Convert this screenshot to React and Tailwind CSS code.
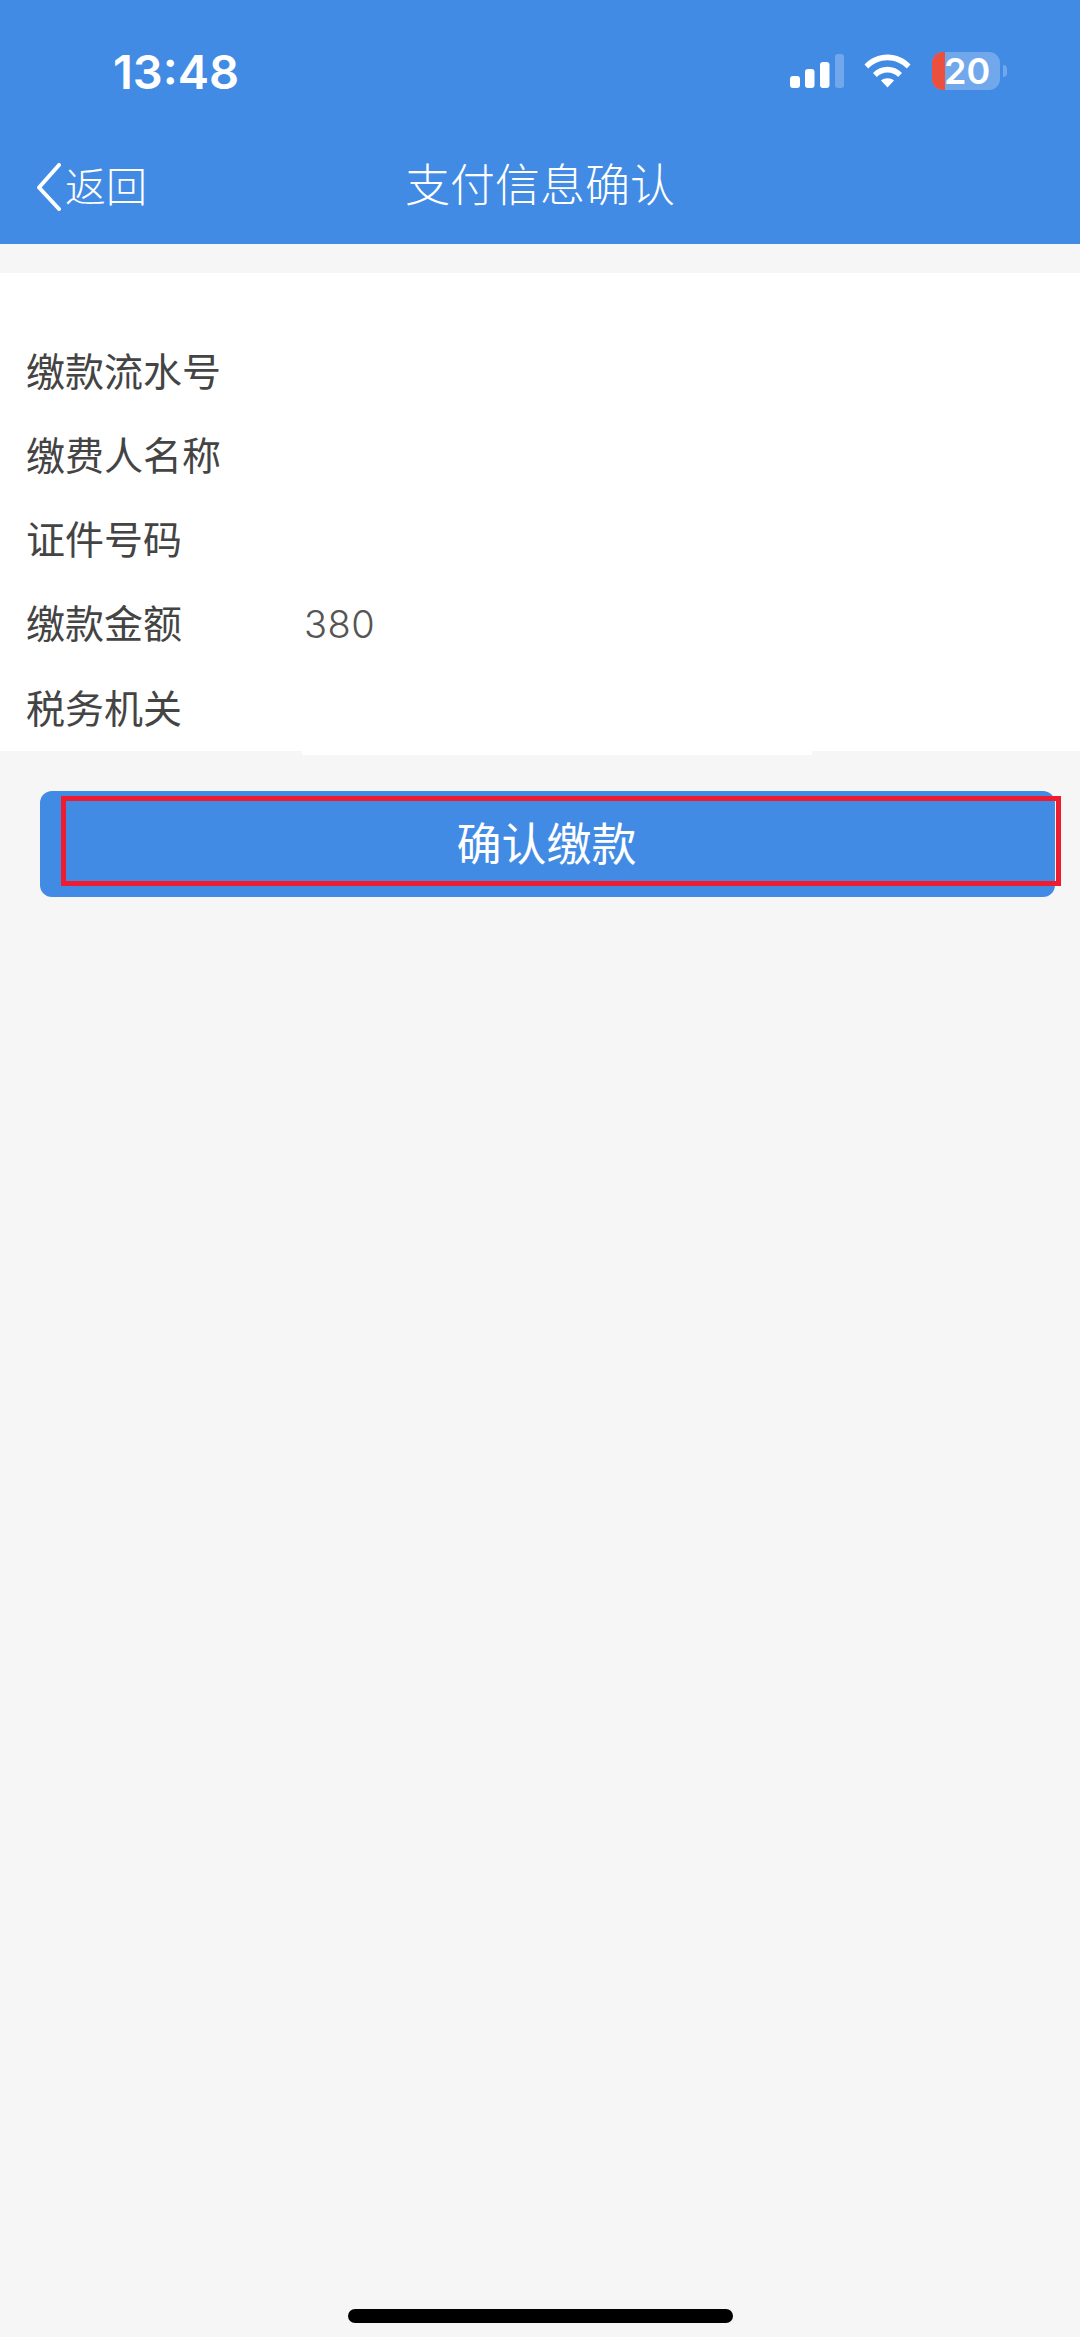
import React from "react";

const CJK = "font-['Inter','Noto_Sans_CJK_SC',sans-serif]";

const rows = [
  { label: "缴款流水号", value: "" },
  { label: "缴费人名称", value: "" },
  { label: "证件号码", value: "" },
  { label: "缴款金额", value: "380" },
  { label: "税务机关", value: "" },
];

const StatusBar = () => (
  <div className="flex h-[142px] items-center pl-[113px] pr-[73px]">
    <span className="text-[47px] leading-none font-semibold text-white font-['Inter',sans-serif]">13:48</span>
    <div className="ml-auto flex items-center">
      {/* signal */}
      <svg width="54" height="34" viewBox="0 0 54 34" fill="#fff">
        <rect x="0" y="22" width="10" height="12" rx="3" />
        <rect x="15" y="15" width="9.5" height="19" rx="3" />
        <rect x="30" y="8" width="9.5" height="26" rx="3" />
        <rect x="45" y="0" width="9" height="34" rx="3" opacity="0.25" />
      </svg>
      {/* wifi */}
      <svg className="ml-[20px]" width="47" height="34" viewBox="0 0 47 34" fill="#fff">
        <path d="M0.5 10.5C6.5 4.200 14.500 0.500 23.500 0.500C32.500 0.500 40.500 4.200 46.500 10.500L42.800 14.500C37.800 9.300 31 6.200 23.500 6.200C16 6.200 9.200 9.300 4.200 14.500Z" />
        <path d="M9 19C13 15 18 12.800 23.500 12.800C29 12.800 34 15 38 19L34.200 23C31.300 20.200 27.600 18.500 23.500 18.500C19.400 18.500 15.700 20.200 12.800 23Z" />
        <path d="M17 26.500C18.800 25 21 24.200 23.500 24.200C26 24.200 28.200 25 30 26.500L23.500 33.500Z" />
      </svg>
      {/* battery */}
      <div className="ml-[21px] flex items-center">
        <div className="flex h-[38px] w-[68px] items-center rounded-[11px] bg-white/25">
          <div className="h-full w-[13px] shrink-0 rounded-l-[11px] bg-[#ec4f3d]" />
          <span className="-ml-[1px] text-[36px] leading-none font-semibold text-white font-['Inter',sans-serif]">20</span>
        </div>
        <div className="ml-[3px] h-[12px] w-[4px] rounded-r-full bg-white/25" />
      </div>
    </div>
  </div>
);

const NavBar = () => (
  <div className="relative flex h-[88px] items-center justify-center">
    <div className="absolute left-[37px] top-[20px] flex items-center">
      <svg width="24" height="48" viewBox="0 0 24 48" fill="none" stroke="#fff" strokeWidth="4" strokeLinecap="round" strokeLinejoin="round">
        <path d="M22 2L2 24.500L22 46" />
      </svg>
      <span className="ml-[4px] text-[41px] leading-[50px] text-white">返回</span>
    </div>
    <span className="text-[45px] leading-[54px] text-white">支付信息确认</span>
  </div>
);

export default function App() {
  return (
    <div className={`flex min-h-[2337px] flex-col bg-[#f6f6f6] font-light ${CJK}`}>
      <header className="h-[244px] bg-[#428be4]">
        <StatusBar />
        <NavBar />
      </header>

      <section className="mt-[29px] bg-white pt-[56px] pb-[1px]">
        {rows.map((row) => (
          <div key={row.label} className="flex h-[84.250px] items-center pl-[26px]">
            <span className="w-[278px] text-[39px] leading-none font-normal text-[#444]">{row.label}</span>
            <span className="text-[38px] leading-none font-light tracking-[0.5px] text-[#555] font-['Inter',sans-serif]">{row.value}</span>
          </div>
        ))}
      </section>
      <div className="ml-[302px] h-[4px] w-[510px] bg-white" />

      <button className="relative ml-[40px] mt-[36px] flex h-[106px] w-[1015px] items-center justify-center rounded-[12px] bg-[#428be4] pr-[2px] text-[45px] font-normal text-white">
        确认缴款
        <span className="absolute left-[21px] top-[5px] h-[90px] w-[1000px] border-[5px] border-[#ee1c2e]" />
      </button>

      <div className="mt-auto flex justify-center pb-[14px]">
        <div className="h-[14px] w-[385px] rounded-full bg-black" />
      </div>
    </div>
  );
}
